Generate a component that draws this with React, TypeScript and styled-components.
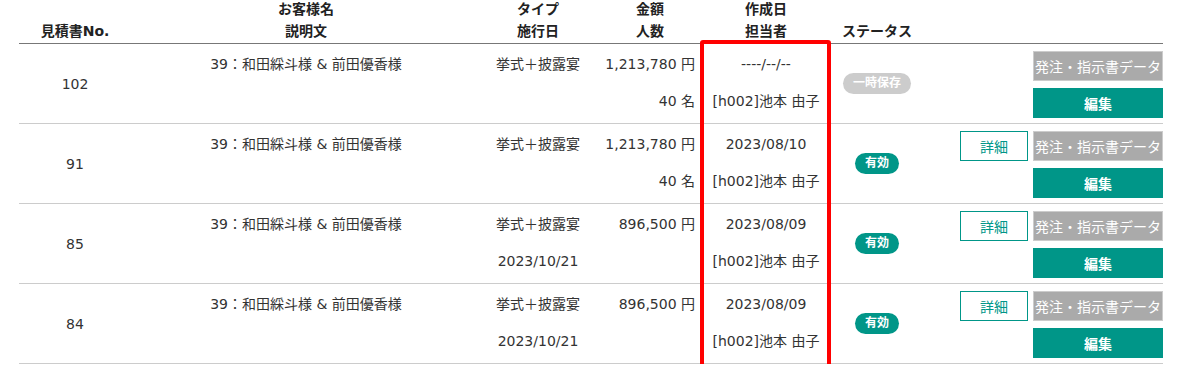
import React from 'react';
import styled, { createGlobalStyle } from 'styled-components';

type Row = {
  no: string;
  desc: string;
  type: string;
  date?: string;
  amount: string;
  people?: string;
  created: string;
  staff: string;
  status: 'draft' | 'active';
  detail: boolean;
};

const rows: Row[] = [
  {
    no: '102',
    desc: '39：和田綵斗様 & 前田優香様',
    type: '挙式＋披露宴',
    amount: '1,213,780 円',
    people: '40 名',
    created: '----/--/--',
    staff: '[h002]池本 由子',
    status: 'draft',
    detail: false,
  },
  {
    no: '91',
    desc: '39：和田綵斗様 & 前田優香様',
    type: '挙式＋披露宴',
    amount: '1,213,780 円',
    people: '40 名',
    created: '2023/08/10',
    staff: '[h002]池本 由子',
    status: 'active',
    detail: true,
  },
  {
    no: '85',
    desc: '39：和田綵斗様 & 前田優香様',
    type: '挙式＋披露宴',
    date: '2023/10/21',
    amount: '896,500 円',
    created: '2023/08/09',
    staff: '[h002]池本 由子',
    status: 'active',
    detail: true,
  },
  {
    no: '84',
    desc: '39：和田綵斗様 & 前田優香様',
    type: '挙式＋披露宴',
    date: '2023/10/21',
    amount: '896,500 円',
    created: '2023/08/09',
    staff: '[h002]池本 由子',
    status: 'active',
    detail: true,
  },
];

const App: React.FC = () => {
  return (
    <>
      <GlobalStyle />
      <Wrapper>
        <Table>
          <colgroup>
            <col style={{ width: 112 }} />
            <col style={{ width: 350 }} />
            <col style={{ width: 114 }} />
            <col style={{ width: 110 }} />
            <col style={{ width: 122 }} />
            <col style={{ width: 100 }} />
            <col style={{ width: 236 }} />
          </colgroup>
          <thead>
            <tr>
              <Th>見積書No.</Th>
              <Th>
                お客様名
                <br />
                説明文
              </Th>
              <Th>
                タイプ
                <br />
                施行日
              </Th>
              <Th>
                金額
                <br />
                人数
              </Th>
              <Th>
                作成日
                <br />
                担当者
              </Th>
              <Th>ステータス</Th>
              <Th />
            </tr>
          </thead>
          <tbody>
            {rows.map((row) => (
              <tr key={row.no}>
                <MiddleCell>{row.no}</MiddleCell>
                <TextCell>
                  <Line>{row.desc}</Line>
                </TextCell>
                <TextCell>
                  <Line>{row.type}</Line>
                  <Line>{row.date}</Line>
                </TextCell>
                <TextCell $align="right">
                  <Line>{row.amount}</Line>
                  <Line>{row.people}</Line>
                </TextCell>
                <TextCell>
                  <Line>{row.created}</Line>
                  <Line>{row.staff}</Line>
                </TextCell>
                <MiddleCell>
                  <Badge $active={row.status === 'active'}>
                    {row.status === 'active' ? '有効' : '一時保存'}
                  </Badge>
                </MiddleCell>
                <ActionCell>
                  <ButtonRow>
                    {row.detail && <OutlineButton>詳細</OutlineButton>}
                    <GrayButton>発注・指示書データ</GrayButton>
                  </ButtonRow>
                  <ButtonRow>
                    <EditButton>編集</EditButton>
                  </ButtonRow>
                </ActionCell>
              </tr>
            ))}
          </tbody>
        </Table>
        <Highlight />
      </Wrapper>
    </>
  );
};

export default App;

const GlobalStyle = createGlobalStyle`
  body {
    margin: 0;
    background: #fff;
    font-family: 'DejaVu Sans', 'Noto Sans CJK JP', sans-serif;
    font-size: 14px;
    color: #333;
  }
`;

const Wrapper = styled.div`
  position: relative;
  margin-top: -2px;
`;

const Table = styled.table`
  margin-left: 19px;
  width: 1144px;
  table-layout: fixed;
  border-collapse: collapse;
`;

const Th = styled.th`
  padding: 0 5px 1px;
  line-height: 22px;
  font-weight: bold;
  color: #222;
  text-align: center;
  vertical-align: bottom;
  white-space: nowrap;
  border-bottom: 1px solid #777;
`;

const Cell = styled.td`
  padding: 5px 5px 0;
  border-bottom: 1px solid #ccc;
  white-space: nowrap;
`;

const TextCell = styled(Cell)<{ $align?: 'right' | 'center' }>`
  vertical-align: top;
  text-align: ${(p) => p.$align || 'center'};
  padding-right: ${(p) => (p.$align === 'right' ? '10px' : '5px')};
`;

const MiddleCell = styled(Cell)`
  vertical-align: middle;
  text-align: center;
  padding: 0 5px;
`;

const Line = styled.div`
  height: 30px;
  line-height: 30px;
  & + & {
    margin-top: 7px;
  }
`;

const Badge = styled.span<{ $active: boolean }>`
  display: inline-block;
  height: 21px;
  line-height: 21px;
  padding: 0 10px;
  border-radius: 11px;
  font-size: 12px;
  font-weight: bold;
  color: #fff;
  background: ${(p) => (p.$active ? '#009688' : '#ccc')};
`;

const ActionCell = styled(Cell)`
  vertical-align: top;
  padding: 7px 0 5px;
`;

const ButtonRow = styled.div`
  display: flex;
  justify-content: flex-end;
  gap: 5px;
  & + & {
    margin-top: 7px;
  }
`;

const BaseButton = styled.button`
  height: 30px;
  padding: 0;
  font-family: inherit;
  font-size: 14px;
  cursor: pointer;
  box-sizing: border-box;
`;

const OutlineButton = styled(BaseButton)`
  width: 68px;
  background: #fff;
  color: #009688;
  border: 1px solid #009688;
`;

const GrayButton = styled(BaseButton)`
  width: 130px;
  background: #aaa;
  color: #fff;
  border: 1px solid #ccc;
`;

const EditButton = styled(BaseButton)`
  width: 130px;
  background: #009688;
  color: #fff;
  font-weight: bold;
  border: none;
`;

const Highlight = styled.div`
  position: absolute;
  left: 700px;
  top: 42px;
  width: 131px;
  height: 328px;
  box-sizing: border-box;
  border: 4px solid #ff0000;
  border-radius: 3px;
  pointer-events: none;
`;
